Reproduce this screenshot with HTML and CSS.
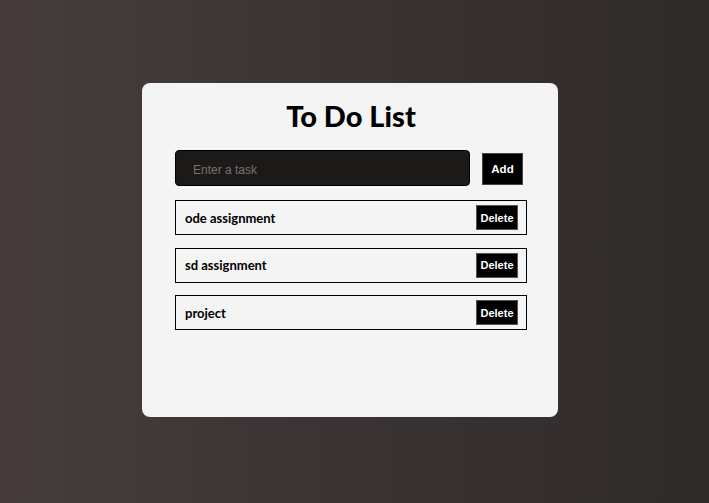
FILE: index.html
```html
<!DOCTYPE html>
<html>
<head>
<meta charset="utf-8">
<link rel="stylesheet" href="styles.css">
</head>
<body>
<div class="card">
  <h1 class="title">To Do List</h1>
  <div class="entry">
    <input class="task-input" type="text" placeholder="Enter a task">
    <button class="add-btn">Add</button>
  </div>
  <ul class="list">
    <li class="item"><span class="item-text">ode assignment</span><button class="del-btn">Delete</button></li>
    <li class="item"><span class="item-text">sd assignment</span><button class="del-btn">Delete</button></li>
    <li class="item"><span class="item-text">project</span><button class="del-btn">Delete</button></li>
  </ul>
</div>
</body>
</html>
```
FILE: styles.css
```css
html, body {
  margin: 0;
  height: 100%;
}
body {
  background: linear-gradient(to right, #463c3c, #2f2a2a);
  font-family: "Lato", "Liberation Sans", sans-serif;
  padding: 83px 0 0 142px;
  box-sizing: border-box;
  overflow: hidden;
}
.card {
  width: 416px;
  height: 334px;
  box-sizing: border-box;
  background: #f4f4f4;
  border-radius: 8px;
  padding: 15px 31px 0 33px;
}
.title {
  margin: 0;
  text-align: center;
  font-size: 29px;
  font-weight: 900;
  color: #000;
  line-height: 36px;
}
.entry {
  display: flex;
  align-items: center;
  gap: 12px;
  margin-top: 16px;
}
.task-input {
  width: 295px;
  height: 36px;
  box-sizing: border-box;
  background: #1c1a19;
  border: 1px solid #000;
  border-radius: 4px;
  padding: 3px 17px 0;
  font-family: "Liberation Sans", Arial, sans-serif;
  font-size: 12px;
  color: #ddd;
  outline: none;
}
.task-input::placeholder {
  color: #77726f;
}
.add-btn {
  width: 41px;
  height: 32px;
  background: #000;
  color: #fff;
  border: 1px solid #444;
  font-family: "Liberation Sans", Arial, sans-serif;
  font-weight: bold;
  font-size: 11.5px;
  padding: 0;
  margin-top: 1px;
}
.list {
  list-style: none;
  margin: 14px 0 0;
  padding: 0;
  display: flex;
  flex-direction: column;
  gap: 12.5px;
}
.item {
  height: 35px;
  box-sizing: border-box;
  border: 1px solid #000;
  display: flex;
  align-items: center;
  justify-content: space-between;
  padding: 0 8px 0 9px;
}
.item-text {
  font-size: 13px;
  font-weight: 700;
  color: #000;
}
.del-btn {
  width: 42px;
  height: 25px;
  background: #000;
  color: #fff;
  border: 1px solid #555;
  font-family: "Liberation Sans", Arial, sans-serif;
  font-weight: bold;
  font-size: 11px;
  padding: 0;
}
```
